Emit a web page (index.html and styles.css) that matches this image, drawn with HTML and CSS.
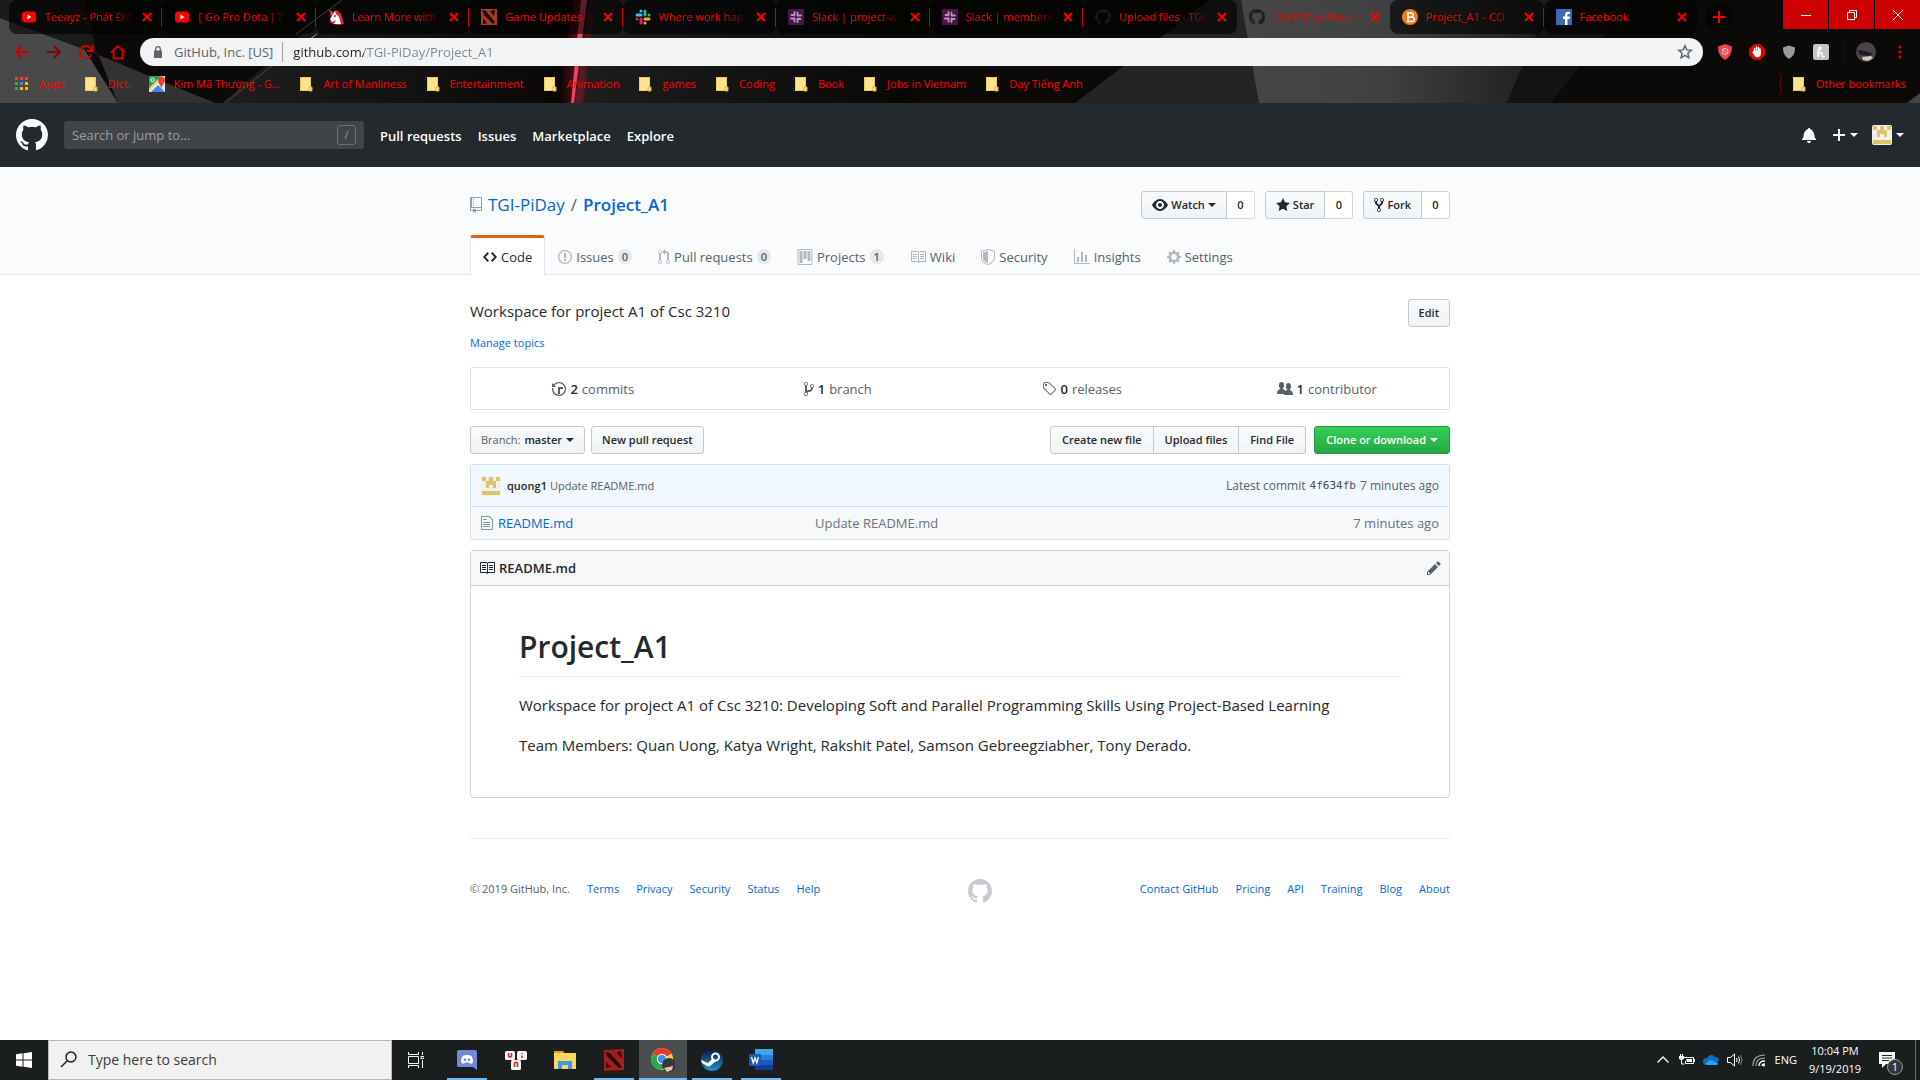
FILE: index.html
```html
<!DOCTYPE html>
<html lang="en">
<head>
<meta charset="utf-8">
<title>TGI-PiDay/Project_A1</title>
<link rel="stylesheet" href="styles.css">
</head>
<body>
<svg class="sprite" aria-hidden="true">
  <symbol id="mark" viewBox="0 0 16 16"><path fill-rule="evenodd" d="M8 0C3.58 0 0 3.58 0 8c0 3.54 2.29 6.53 5.47 7.59.4.07.55-.17.55-.38 0-.19-.01-.82-.01-1.49-2.01.37-2.53-.49-2.69-.94-.09-.23-.48-.94-.82-1.13-.28-.15-.68-.52-.01-.53.63-.01 1.08.58 1.23.82.72 1.21 1.87.87 2.33.66.07-.52.28-.87.51-1.07-1.78-.2-3.64-.89-3.64-3.95 0-.87.31-1.59.82-2.15-.08-.2-.36-1.02.08-2.12 0 0 .67-.21 2.2.82.64-.18 1.32-.27 2-.27.68 0 1.36.09 2 .27 1.53-1.04 2.2-.82 2.2-.82.44 1.1.16 1.92.08 2.12.51.56.82 1.27.82 2.15 0 3.07-1.87 3.75-3.65 3.95.29.25.54.73.54 1.48 0 1.07-.01 1.93-.01 2.2 0 .21.15.46.55.38A8.013 8.013 0 0 0 16 8c0-4.42-3.58-8-8-8z"/></symbol>
  <symbol id="book" viewBox="0 0 16 16"><path fill-rule="evenodd" d="M3 5h4v1H3V5zm0 3h4V7H3v1zm0 2h4V9H3v1zm11-5h-4v1h4V5zm0 2h-4v1h4V7zm0 2h-4v1h4V9zm2-6v9c0 .55-.45 1-1 1H9.500l-1 1-1-1H2c-.55 0-1-.45-1-1V3c0-.55.45-1 1-1h5.500l1 1 1-1H15c.55 0 1 .45 1 1zm-8 .5L7.500 3H2v9h6V3.500zm7-.5H9.500l-.5.5V12h6V3z"/></symbol>
  <symbol id="folder" viewBox="0 0 16 16"><path d="M2 1h11v14H2z" fill="#ffe48c"/><path d="M2.500 1.500h10v10M2.500 1.500v13h9" fill="none" stroke="#eccb5b"/><path d="M11 11h3v4h-3z" fill="#ffe48c" stroke="#d9b23c"/></symbol>
  <symbol id="close" viewBox="0 0 10 10"><path d="M1 1l8 8M9 1L1 9" stroke="#f00" stroke-width="2"/></symbol>
  <symbol id="youtube" viewBox="0 0 16 16"><rect x="1" y="2.500" width="14" height="11" rx="3" fill="#f00"/><path d="M6.500 5.500v5l4-2.500z" fill="#fff"/></symbol>
  <symbol id="slack-old" viewBox="0 0 16 16"><rect width="16" height="16" fill="#4a154b"/><path d="M6.500 3v3.500M3.500 6h3M9.500 3.500v3M9.500 6.500H13M6.500 12.500v-3M3 9.500h3.500M9.500 13V9.500M9.500 10h3" fill="none" stroke="#b995ba" stroke-width="1.800" stroke-linecap="round"/></symbol>
  <symbol id="crown" viewBox="0 0 20 20"><rect width="20" height="20" rx="2" fill="#f0f0f0"/><path d="M1 1h4v4H1zM8 1h4v4H8zM15 1h4v4h-4zM5 5h10v7h-3V9H8v3H5zM1 15h18v4H1z" fill="#dcc468"/></symbol>
  <symbol id="caret" viewBox="0 0 8 4"><path d="M0 0h8L4 4z"/></symbol>
</svg>

<div class="browser">
  <svg class="backdrop" viewBox="0 0 1920 103" preserveAspectRatio="none" aria-hidden="true">
    <defs>
      <linearGradient id="panel"><stop offset="0" stop-color="#464646"/><stop offset=".45" stop-color="#414141"/><stop offset="1" stop-color="#1c1c1b"/></linearGradient>
      <linearGradient id="shade"><stop offset="0" stop-color="#1e1e1e"/><stop offset="1" stop-color="#080706"/></linearGradient>
      <linearGradient id="glow"><stop offset="0" stop-color="#e01030" stop-opacity="0"/><stop offset=".5" stop-color="#e01030" stop-opacity=".35"/><stop offset="1" stop-color="#e01030" stop-opacity="0"/></linearGradient>
    </defs>
    <rect width="1920" height="103" fill="#0b0a09"/>
    <path d="M0 18L84 49 118 103H0z" fill="#494949"/>
    <path d="M84 49L215 103H118L98 54z" fill="#323232"/>
    <path d="M0 18V0h85l12 54z" fill="#1b1b1a"/>
    <path d="M342 0h235l-10 103H222z" fill="url(#shade)"/>
    <path d="M342 0L296 34M317 34L272 66" stroke="#a0a0a0" fill="none"/>
    <path d="M272 66L225 103" stroke="#4a4a4a"/>
    <path d="M590 0h260l70 103H575z" fill="url(#shade)"/>
    <path d="M573 0h24l-14 103h-24z" fill="url(#glow)"/>
    <path d="M581 0h6l-13 103h-3z" fill="#e84860"/>
    <path d="M1075 103L1210 0h35l14 103z" fill="#242424"/>
    <path d="M1241 0h310l-44 103h-248z" fill="url(#panel)"/>
    <path d="M1551 0h80l-80 103h-44z" fill="#141313"/>
    <path d="M1907 103l13-10v10z" fill="#444"/>
  </svg>

  <div class="strip">
    <div class="tabs">
      <div class="tab"><svg class="i16"><use href="#youtube"/></svg><span class="tab-title">Teeayz - Phát Điê</span><button class="x" aria-label="Close"><svg class="i10"><use href="#close"/></svg></button></div>
      <div class="tab"><svg class="i16"><use href="#youtube"/></svg><span class="tab-title">[ Go Pro Dota ] T</span><button class="x" aria-label="Close"><svg class="i10"><use href="#close"/></svg></button></div>
      <div class="tab"><svg class="i16" viewBox="0 0 16 16"><path d="M1 0l4 3 4-2 4 4 3 10-5 1-6-1-3-2 1-4z" fill="#d92c3c"/><path d="M2 10l3-5 2-3 1 3 3 3 2 7H6l2-4-4 2z" fill="#fff"/><circle cx="7" cy="7" r="1" fill="#d92c3c"/></svg><span class="tab-title">Learn More with</span><button class="x" aria-label="Close"><svg class="i10"><use href="#close"/></svg></button></div>
      <div class="tab"><svg class="i16" viewBox="0 0 16 16"><path d="M0 0h16v16H0z" fill="#a93a24"/><path d="M1 1l4 1 9 11-2 2-9-9zM9 2l5-1-1 6zM2 9l4 5-4 1z" fill="#1c0b08"/></svg><span class="tab-title whole">Game Updates</span><button class="x" aria-label="Close"><svg class="i10"><use href="#close"/></svg></button></div>
      <div class="tab"><svg class="i16" viewBox="0 0 16 16" fill="none" stroke-width="3" stroke-linecap="round"><path d="M2 6h4M6 2v.1" stroke="#36c5f0"/><path d="M10 2v4M14 6h.1" stroke="#2eb67d"/><path d="M10 10h4M10 14v-.1" stroke="#ecb22e"/><path d="M6 10v4M2 10h.1" stroke="#e01e5a"/></svg><span class="tab-title">Where work hap</span><button class="x" aria-label="Close"><svg class="i10"><use href="#close"/></svg></button></div>
      <div class="tab"><svg class="i16"><use href="#slack-old"/></svg><span class="tab-title">Slack | project-a</span><button class="x" aria-label="Close"><svg class="i10"><use href="#close"/></svg></button></div>
      <div class="tab"><svg class="i16"><use href="#slack-old"/></svg><span class="tab-title">Slack | memberin</span><button class="x" aria-label="Close"><svg class="i10"><use href="#close"/></svg></button></div>
      <div class="tab tab-before"><svg class="i16 dim"><use href="#mark"/></svg><span class="tab-title">Upload files · TGI</span><button class="x" aria-label="Close"><svg class="i10"><use href="#close"/></svg></button></div>
      <div class="tab tab-active"><svg class="i16 dark"><use href="#mark"/></svg><span class="tab-title">TGI-PiDay/Projec</span><button class="x" aria-label="Close"><svg class="i10"><use href="#close"/></svg></button></div>
      <div class="tab"><svg class="i16" viewBox="0 0 16 16"><circle cx="8" cy="8" r="8" fill="#f07c1c"/><path d="M6 3v10M5 4h4c3 0 3 4 0 4H6h4c3 0 3 4.500 0 4.500H5" fill="none" stroke="#fff" stroke-width="1.500"/></svg><span class="tab-title">Project_A1 - CO</span><button class="x" aria-label="Close"><svg class="i10"><use href="#close"/></svg></button></div>
      <div class="tab tab-last"><svg class="i16" viewBox="0 0 16 16"><path d="M0 0h16v16H0z" fill="#4267b2"/><path d="M9 16v-6H7V7.500h2V6c0-2 1-3.200 3-3.200h2V5h-1.500c-.8 0-1 .4-1 1v1.500H14l-.4 2.500h-2.100v6z" fill="#fff"/></svg><span class="tab-title whole">Facebook</span><button class="x" aria-label="Close"><svg class="i10"><use href="#close"/></svg></button></div>
    </div>
    <button class="newtab" aria-label="New tab"><svg class="i12" viewBox="0 0 12 12"><path d="M6 0v12M0 6h12" stroke="#f00" stroke-width="2"/></svg></button>
    <div class="winctl">
      <button aria-label="Minimize"><svg class="i10" viewBox="0 0 10 10"><path d="M0 5.500h10" stroke="#fff"/></svg></button>
      <button aria-label="Restore"><svg class="i10" viewBox="0 0 10 10" fill="none" stroke="#fff"><path d="M.5 2.500h7v7h-7zM2.500 2.500v-2h7v7h-2"/></svg></button>
      <button aria-label="Close window"><svg class="i10" viewBox="0 0 10 10"><path d="M0 0l10 10M10 0L0 10" stroke="#fff"/></svg></button>
    </div>
  </div>

  <div class="toolbar">
    <button class="tool" aria-label="Back"><svg class="i16" viewBox="0 0 16 16" fill="none" stroke="#d00000" stroke-width="2"><path d="M15 8H2M8 2L2 8l6 6"/></svg></button>
    <button class="tool" aria-label="Forward"><svg class="i16" viewBox="0 0 16 16" fill="none" stroke="#7a0a0a" stroke-width="2"><path d="M1 8h13M8 2l6 6-6 6"/></svg></button>
    <button class="tool" aria-label="Reload"><svg class="i16" viewBox="0 0 16 16" fill="none" stroke="#d00000" stroke-width="2"><path d="M13.500 10A6 6 0 1 1 12 3.800L14 6M14.500 1v6h-6"/></svg></button>
    <button class="tool" aria-label="Home"><svg class="i16" viewBox="0 0 16 16" fill="none" stroke="#d00000" stroke-width="2"><path d="M1 8.500L8 2l7 6.500M3.500 7v7.500h9V7"/></svg></button>
    <div class="omnibox">
      <svg class="i12" viewBox="0 0 12 12"><path d="M2 4.500h8V12H2z" fill="#5f6368"/><path d="M3.700 5V3a2.300 2.300 0 0 1 4.600 0v2" fill="none" stroke="#5f6368" stroke-width="1.300"/></svg>
      <label class="origin" for="url">GitHub, Inc. [US]</label>
      <input class="url" id="url" value="github.com/TGI-PiDay/Project_A1">
      <button class="plain" aria-label="Bookmark"><svg class="i16" viewBox="0 0 16 16"><path d="M8 1.800l1.800 4.100 4.400.4-3.300 3 1 4.400L8 11.400l-3.900 2.300 1-4.400-3.300-3 4.400-.4z" fill="none" stroke="#5f6368" stroke-width="1.500"/></svg></button>
    </div>
    <div class="exts">
      <button class="plain" aria-label="uBlock"><svg class="i16" viewBox="0 0 16 16"><path d="M8 0l7 2.500c0 6-1.500 10-7 13.500C2.500 12.500 1 8.500 1 2.500z" fill="#e8474d"/><circle cx="8" cy="7.500" r="3" fill="none" stroke="#fbd0d0"/><path d="M6 5.500l4 4" stroke="#fbd0d0"/></svg></button>
      <button class="plain" aria-label="AdBlock"><svg class="i16" viewBox="0 0 16 16"><path d="M5 0h6l5 5v6l-5 5H5l-5-5V5z" fill="#e60000"/><path d="M5.500 8V4.500M7.500 8V3M9.500 8V3.500M11 8V5" stroke="#fff" stroke-width="1.500" stroke-linecap="round"/><path d="M4.800 7h7v3c0 4-5.500 4.500-6.600 1L3 8.500z" fill="#fff"/></svg></button>
      <button class="plain" aria-label="Shield"><svg class="i16" viewBox="0 0 16 16"><path d="M8 1.500l6 2c0 5.500-1.500 8.500-6 11.500-4.500-3-6-6-6-11.500z" fill="#9a9a9a"/></svg></button>
      <button class="plain" aria-label="Honey"><svg class="i16" viewBox="0 0 16 16"><rect width="16" height="16" rx="2" fill="#c4c4c4"/><path d="M4 7c4-1 5-4 3-4S5 9 5 13c1-5 4-6 4-3s0 4 3 2" fill="none" stroke="#fff" stroke-width="1.500"/></svg></button>
    </div>
    <button class="plain profile" aria-label="Profile"><svg class="i20" viewBox="0 0 20 20"><circle cx="10" cy="10" r="10" fill="#46464a"/><path d="M2 8l8 1 7 3-4 2-9-1z" fill="#1c1c1e"/><path d="M6 15l9-1 2 2-5 3-5-1z" fill="#d8c8b0"/><path d="M8 3l4-1" stroke="#7a3038" stroke-width="2"/></svg></button>
    <button class="plain" aria-label="Menu"><svg class="i16" viewBox="0 0 16 16" fill="#d00000"><circle cx="8" cy="3" r="1.600"/><circle cx="8" cy="8" r="1.600"/><circle cx="8" cy="13" r="1.600"/></svg></button>
  </div>

  <nav class="bookmarks">
    <a href="#"><svg class="i16" viewBox="0 0 16 16"><path d="M1 1h3v3H1zM6 1h3v3H6zM11 1h3v3h-3z" fill="#ea4335"/><path d="M1 6h3v3H1z" fill="#34a853"/><path d="M6 6h3v3H6z" fill="#4285f4"/><path d="M11 6h3v3h-3zM6 11h3v3H6zM11 11h3v3h-3z" fill="#fbbc05"/><path d="M1 11h3v3H1z" fill="#34a853"/></svg>Apps</a>
    <a href="#"><svg class="i16"><use href="#folder"/></svg>Dict.</a>
    <a href="#"><svg class="i16" viewBox="0 0 16 16"><path d="M0 0h16v16H0z" fill="#e8e8e8"/><path d="M0 0h13L0 13z" fill="#1fa463"/><path d="M2 16l7-7 7 7z" fill="#4285f4"/><path d="M0 12L12 0h3L0 15z" fill="#ffd04b"/><path d="M12.500 12C11 8 9 7 9 4a3.500 3.500 0 0 1 7 0c0 3-2.500 4-3.500 8z" fill="#ea4335"/><circle cx="3.500" cy="4" r="1.700" fill="none" stroke="#fff"/></svg>Kim Mã Thượng - G...</a>
    <a href="#"><svg class="i16"><use href="#folder"/></svg>Art of Manliness</a>
    <a href="#"><svg class="i16"><use href="#folder"/></svg>Entertainment</a>
    <a href="#"><svg class="i16"><use href="#folder"/></svg>Animation</a>
    <a href="#"><svg class="i16"><use href="#folder"/></svg>games</a>
    <a href="#"><svg class="i16"><use href="#folder"/></svg>Coding</a>
    <a href="#"><svg class="i16"><use href="#folder"/></svg>Book</a>
    <a href="#"><svg class="i16"><use href="#folder"/></svg>Jobs in Vietnam</a>
    <a href="#"><svg class="i16"><use href="#folder"/></svg>Dạy Tiếng Anh</a>
    <a href="#" class="other"><svg class="i16"><use href="#folder"/></svg>Other bookmarks</a>
  </nav>
</div>

<header class="gh-header">
  <a href="#" class="gh-logo" aria-label="GitHub"><svg class="i32"><use href="#mark"/></svg></a>
  <div class="gh-search"><input type="text" placeholder="Search or jump to..." aria-label="Search or jump to"><kbd>/</kbd></div>
  <nav class="gh-nav"><a href="#">Pull requests</a><a href="#">Issues</a><a href="#">Marketplace</a><a href="#">Explore</a></nav>
  <div class="gh-user">
    <button class="plain" aria-label="Notifications"><svg class="i16" viewBox="0 0 14 16"><path fill-rule="evenodd" d="M14 12v1H0v-1l.73-.58c.77-.77.81-2.55 1.190-4.420C2.690 3.230 6 2 6 2c0-.55.45-1 1-1s1 .45 1 1c0 0 3.390 1.230 4.160 5 .38 1.880.42 3.660 1.190 4.420l.66.58H14zm-7 4c1.110 0 2-.89 2-2H5c0 1.110.89 2 2 2z"/></svg></button>
    <button class="plain" aria-label="Create new"><svg class="i16" viewBox="0 0 14 16"><path d="M13 9H8v5H6V9H1V7h5V2h2v5h5v2z"/></svg><svg class="caret"><use href="#caret"/></svg></button>
    <button class="plain account" aria-label="Account"><svg class="i20"><use href="#crown"/></svg><svg class="caret"><use href="#caret"/></svg></button>
  </div>
</header>

<div class="pagehead">
  <div class="container">
    <div class="title-row">
      <h1 class="repo-title"><svg class="w12" viewBox="0 0 12 16"><path fill-rule="evenodd" d="M4 9H3V8h1v1zm0-3H3v1h1V6zm0-2H3v1h1V4zm0-2H3v1h1V2zm8-1v12c0 .55-.45 1-1 1H6v2l-1.500-1.500L3 16v-2H1c-.55 0-1-.45-1-1V1c0-.55.45-1 1-1h10c.55 0 1 .45 1 1zm-1 10H1v2h2v-1h3v1h5v-2zm0-10H2v9h9V1z"/></svg><a href="#">TGI-PiDay</a><span>/</span><a href="#" class="strong">Project_A1</a></h1>
      <div class="social">
        <div class="group"><button class="btn"><svg class="i16" viewBox="0 0 16 16"><path fill-rule="evenodd" d="M8.060 2C3 2 0 8 0 8s3 6 8.060 6C13 14 16 8 16 8s-3-6-7.940-6zM8 12c-2.200 0-4-1.780-4-4 0-2.200 1.800-4 4-4 2.220 0 4 1.800 4 4 0 2.220-1.780 4-4 4zm2-4c0 1.110-.89 2-2 2-1.110 0-2-.89-2-2 0-1.110.89-2 2-2 1.110 0 2 .89 2 2z"/></svg>Watch<svg class="caret"><use href="#caret"/></svg></button><a href="#" class="count">0</a></div>
        <div class="group"><button class="btn"><svg class="w14" viewBox="0 0 14 16"><path d="M14 6l-4.900-.64L7 1 4.900 5.360 0 6l3.600 3.260L2.670 14 7 11.670 11.330 14l-.93-4.740L14 6z"/></svg>Star</button><a href="#" class="count">0</a></div>
        <div class="group"><button class="btn"><svg class="w10" viewBox="0 0 10 16"><path fill-rule="evenodd" d="M8 1a1.993 1.993 0 0 0-1 3.720V6L5 8 3 6V4.720A1.993 1.993 0 0 0 2 1a1.993 1.993 0 0 0-1 3.720V6.500l3 3v1.780A1.993 1.993 0 0 0 5 15a1.993 1.993 0 0 0 1-3.720V9.500l3-3V4.720A1.993 1.993 0 0 0 8 1zM2 4.200C1.340 4.200.8 3.650.8 3c0-.65.55-1.200 1.200-1.200.65 0 1.200.55 1.200 1.200 0 .65-.55 1.200-1.200 1.200zm3 10c-.66 0-1.200-.55-1.200-1.200 0-.65.55-1.200 1.200-1.200.65 0 1.200.55 1.200 1.200 0 .65-.55 1.200-1.200 1.200zm3-10c-.66 0-1.200-.55-1.200-1.200 0-.65.55-1.200 1.200-1.200.65 0 1.200.55 1.200 1.200 0 .65-.55 1.200-1.200 1.200z"/></svg>Fork</button><a href="#" class="count">0</a></div>
      </div>
    </div>
    <nav class="reponav">
      <a href="#" class="selected"><svg class="w14" viewBox="0 0 14 16"><path d="M9.500 3L8 4.500 11.500 8 8 11.500 9.500 13 14 8 9.500 3zm-5 0L0 8l4.500 5L6 11.500 2.500 8 6 4.500 4.500 3z"/></svg>Code</a>
      <a href="#"><svg class="w14" viewBox="0 0 14 16"><path fill-rule="evenodd" d="M7 2.300c3.140 0 5.700 2.560 5.700 5.700s-2.560 5.700-5.700 5.700A5.710 5.710 0 0 1 1.300 8c0-3.140 2.560-5.700 5.700-5.700zM7 1C3.140 1 0 4.140 0 8s3.140 7 7 7 7-3.140 7-7-3.140-7-7-7zm1 3H6v5h2V4zm0 6H6v2h2v-2z"/></svg>Issues<span class="badge">0</span></a>
      <a href="#"><svg class="w12" viewBox="0 0 12 16"><path fill-rule="evenodd" d="M11 11.280V5c-.03-.78-.34-1.470-.94-2.060C9.460 2.350 8.780 2.030 8 2H7V0L4 3l3 3V4h1c.27.02.48.11.69.31.21.2.3.42.31.69v6.280A1.993 1.993 0 0 0 10 15a1.993 1.993 0 0 0 1-3.720zm-1 2.920c-.66 0-1.200-.55-1.200-1.200 0-.65.55-1.200 1.200-1.200.65 0 1.200.55 1.200 1.200 0 .65-.55 1.200-1.200 1.200zM4 3c0-1.110-.89-2-2-2a1.993 1.993 0 0 0-1 3.720v6.560A1.993 1.993 0 0 0 2 15a1.993 1.993 0 0 0 1-3.720V4.720c.59-.34 1-.98 1-1.720zm-.8 10c0 .66-.55 1.200-1.200 1.200-.65 0-1.200-.55-1.200-1.200 0-.65.55-1.200 1.200-1.200.65 0 1.200.55 1.200 1.200zM2 4.200C1.340 4.200.8 3.650.8 3c0-.65.55-1.200 1.200-1.200.65 0 1.200.55 1.200 1.200 0 .65-.55 1.200-1.200 1.200z"/></svg>Pull requests<span class="badge">0</span></a>
      <a href="#"><svg class="i16" viewBox="0 0 15 16"><path fill-rule="evenodd" d="M10 12h3V2h-3v10zm-4-2h3V2H6v8zm-4 4h3V2H2v12zm-1 1h13V1H1v14zM14 0H1a1 1 0 0 0-1 1v14a1 1 0 0 0 1 1h13a1 1 0 0 0 1-1V1a1 1 0 0 0-1-1z"/></svg>Projects<span class="badge">1</span></a>
      <a href="#"><svg class="i16"><use href="#book"/></svg>Wiki</a>
      <a href="#"><svg class="w14" viewBox="0 0 14 16"><path fill-rule="evenodd" d="M0 2l7-2 7 2v6.020C14 12.690 8.690 16 7 16c-1.690 0-7-3.310-7-7.980V2zm1 .75L7 1l6 1.750v5.268C13 12.104 8.449 15 7 15c-1.449 0-6-2.896-6-6.982V2.750zm1 .75L7 2v12c-1.207 0-5-2.482-5-5.985V3.500z"/></svg>Security</a>
      <a href="#"><svg class="i16" viewBox="0 0 16 16"><path d="M16 14v1H0V0h1v14h15zM5 13H3V8h2v5zm4 0H7V3h2v10zm4 0h-2V6h2v7z"/></svg>Insights</a>
      <a href="#"><svg class="w14" viewBox="0 0 14 16"><path fill-rule="evenodd" d="M14 8.770v-1.600l-1.940-.64-.45-1.090.88-1.840-1.130-1.130-1.810.91-1.090-.45-.69-1.920h-1.600l-.63 1.940-1.110.45-1.840-.88-1.130 1.130.91 1.810-.45 1.090L0 7.230v1.590l1.940.64.45 1.090-.88 1.840 1.130 1.130 1.810-.91 1.090.45.69 1.920h1.590l.63-1.940 1.110-.45 1.840.88 1.130-1.130-.92-1.810.47-1.090L14 8.750v.02zM7 11c-1.660 0-3-1.340-3-3s1.340-3 3-3 3 1.340 3 3-1.340 3-3 3z"/></svg>Settings</a>
    </nav>
  </div>
</div>

<main class="container main">
  <div class="about"><span>Workspace for project A1 of Csc 3210</span><button class="btn">Edit</button></div>
  <a href="#" class="topics">Manage topics</a>

  <ul class="summary">
    <li><a href="#"><svg class="w14" viewBox="0 0 14 16"><path fill-rule="evenodd" d="M8 13H6V6h5v2H8v5zM7 1C4.810 1 2.870 2.020 1.590 3.590L0 2v4h4L2.500 4.500C3.550 3.170 5.170 2.300 7 2.300c3.140 0 5.700 2.560 5.700 5.700s-2.560 5.700-5.700 5.700A5.710 5.710 0 0 1 1.300 8c0-.34.03-.67.09-1H.08C.03 7.330 0 7.660 0 8c0 3.860 3.140 7 7 7s7-3.140 7-7-3.140-7-7-7z"/></svg><b>2</b>commits</a></li>
    <li><a href="#"><svg class="w10" viewBox="0 0 10 16"><path fill-rule="evenodd" d="M10 5c0-1.110-.89-2-2-2a1.993 1.993 0 0 0-1 3.720v.3c-.02.52-.23.98-.63 1.380-.4.4-.86.61-1.380.63-.83.02-1.480.16-2 .45V4.720a1.993 1.993 0 0 0-1-3.720C.88 1 0 1.890 0 3a2 2 0 0 0 1 1.720v6.560c-.59.35-1 .99-1 1.720 0 1.110.89 2 2 2 1.110 0 2-.89 2-2 0-.53-.2-1-.53-1.360.09-.06.48-.41.59-.47.25-.11.56-.17.94-.17 1.050-.05 1.950-.45 2.750-1.250S8.950 7.770 9 6.730h-.02C9.590 6.370 10 5.730 10 5zM2 1.800c.66 0 1.200.55 1.200 1.200 0 .65-.55 1.200-1.200 1.200C1.350 4.200.8 3.650.8 3c0-.65.55-1.200 1.200-1.200zm0 12.410c-.66 0-1.200-.55-1.200-1.200 0-.65.55-1.200 1.200-1.200.65 0 1.200.55 1.200 1.200 0 .65-.55 1.200-1.200 1.200zm6-8c-.66 0-1.200-.55-1.200-1.200 0-.65.55-1.200 1.200-1.200.65 0 1.200.55 1.200 1.200 0 .65-.55 1.200-1.200 1.200z"/></svg><b>1</b>branch</a></li>
    <li><a href="#"><svg class="w14" viewBox="0 0 14 16"><path fill-rule="evenodd" d="M7.730 1.730C7.260 1.260 6.620 1 5.960 1H3.500C2.130 1 1 2.130 1 3.500v2.470c0 .66.27 1.300.73 1.770l6.060 6.060c.39.39 1.020.39 1.410 0l4.590-4.590a.996.996 0 0 0 0-1.410L7.730 1.730zM2.380 7.090c-.31-.3-.47-.7-.47-1.130V3.500c0-.88.72-1.590 1.590-1.590h2.470c.42 0 .83.16 1.130.47l6.140 6.130-4.730 4.730-6.130-6.150zM3.010 3h2v2H3V3h.01z"/></svg><b>0</b>releases</a></li>
    <li><a href="#"><svg class="i16" viewBox="0 0 16 16"><path d="M16 12.999c0 .439-.45 1-1 1H7.995c-.539 0-.994-.447-.995-.999H1c-.54 0-1-.561-1-1 0-2.634 3-4 3-4s.229-.409 0-1c-.841-.621-1.058-.59-1-3 .058-2.419 1.367-3 2.500-3s2.442.58 2.500 3c.058 2.410-.159 2.379-1 3-.229.59 0 1 0 1s1.549.711 2.420 2.088C9.196 9.369 10 8.999 10 8.999s.229-.409 0-1c-.841-.62-1.058-.59-1-3 .058-2.419 1.367-3 2.500-3s2.437.581 2.495 3c.059 2.410-.158 2.380-1 3-.229.59 0 1 0 1s3.005 1.366 3.005 4"/></svg><b>1</b>contributor</a></li>
  </ul>

  <div class="filenav">
    <button class="btn"><span class="muted">Branch:</span>master<svg class="caret"><use href="#caret"/></svg></button>
    <button class="btn">New pull request</button>
    <div class="group push"><button class="btn wide">Create new file</button><button class="btn wide">Upload files</button><button class="btn wide">Find File</button></div>
    <button class="btn wide primary">Clone or download<svg class="caret"><use href="#caret"/></svg></button>
  </div>

  <div class="commit">
    <svg class="i20"><use href="#crown"/></svg>
    <a href="#" class="author">quong1</a><a href="#" class="msg">Update README.md</a>
    <div class="latest"><span>Latest commit</span><a href="#" class="sha">4f634fb</a><span>7 minutes ago</span></div>
  </div>
  <table class="files">
    <tr><td class="name"><div class="file"><svg class="w12" viewBox="0 0 12 16"><path fill-rule="evenodd" d="M6 5H2V4h4v1zM2 8h7V7H2v1zm0 2h7V9H2v1zm0 2h7v-1H2v1zm10-7.500V14c0 .55-.45 1-1 1H1c-.55 0-1-.45-1-1V2c0-.55.45-1 1-1h7.500L12 4.500zM11 5L8 2H1v12h10V5z"/></svg><a href="#">README.md</a></div></td><td>Update README.md</td><td class="age">7 minutes ago</td></tr>
  </table>

  <section class="readme">
    <div class="readme-head"><svg class="i16"><use href="#book"/></svg><h3>README.md</h3><button class="plain edit" aria-label="Edit this file"><svg class="w14" viewBox="0 0 14 16"><path fill-rule="evenodd" d="M0 12v3h3l8-8-3-3-8 8zm3 2H1v-2h1v1h1v1zm10.300-9.300L12 6 9 3l1.300-1.300a.996.996 0 0 1 1.410 0l1.590 1.590c.39.39.39 1.020 0 1.410z"/></svg></button></div>
    <article class="readme-body">
      <h1>Project_A1</h1>
      <p>Workspace for project A1 of Csc 3210: Developing Soft and Parallel Programming Skills Using Project-Based Learning</p>
      <p>Team Members: Quan Uong, Katya Wright, Rakshit Patel, Samson Gebreegziabher, Tony Derado.</p>
    </article>
  </section>

  <footer class="footer">
    <div class="links"><span>© 2019 GitHub, Inc.</span><a href="#">Terms</a><a href="#">Privacy</a><a href="#">Security</a><a href="#">Status</a><a href="#">Help</a></div>
    <svg class="i24"><use href="#mark"/></svg>
    <div class="links"><a href="#">Contact GitHub</a><a href="#">Pricing</a><a href="#">API</a><a href="#">Training</a><a href="#">Blog</a><a href="#">About</a></div>
  </footer>
</main>

<div class="taskbar">
  <button class="app" aria-label="Start"><svg class="i16" viewBox="0 0 16 16" fill="#fff"><path d="M0 2.200l6.500-.9v6.200H0zM7.500 1.200L16 0v7.500H7.500zM0 8.500h6.500v6.200L0 13.800zM7.500 8.500H16V16l-8.500-1.200z"/></svg></button>
  <div class="winsearch"><svg class="i20" viewBox="0 0 20 20" fill="none" stroke="#1c1c1c" stroke-width="1.400"><circle cx="12" cy="7" r="5"/><path d="M8.500 10.500L2 17"/></svg><input type="text" placeholder="Type here to search" aria-label="Type here to search"></div>
  <button class="app" aria-label="Task view"><svg class="i16" viewBox="0 0 16 16" fill="none" stroke="#fff"><path d="M.5 0v2.500h10V0M.5 16v-2.500h10V16M.5 4.500h10v7H.5zM14.500 0v3M14.500 8v8M13 4.500h3v2h-3z"/></svg></button>
  <div class="apps">
    <button class="app open" aria-label="Discord"><svg class="i22" viewBox="0 0 22 22"><path d="M3 1h16a2 2 0 0 1 2 2v18l-4-3H3a2 2 0 0 1-2-2V3a2 2 0 0 1 2-2z" fill="#7289da"/><path d="M6.500 7Q11 5 15.500 7q2 3.500 1.500 6.500-1.500 1.200-3 1.200l-.8-1.200H9l-.8 1.200q-1.700 0-3.200-1.200Q4.500 10.500 6.500 7z" fill="#fff"/><circle cx="9" cy="10.700" r="1.300" fill="#7289da"/><circle cx="13" cy="10.700" r="1.300" fill="#7289da"/></svg></button>
    <button class="app" aria-label="UniKey"><svg class="i22" viewBox="0 0 22 22"><rect x="0" y="2" width="10" height="9" rx="1.500" fill="#f4f4f4"/><rect x="12" y="2" width="10" height="9" rx="1.500" fill="#f4f4f4"/><rect x="6" y="11" width="10" height="10" rx="1.500" fill="#f4f4f4"/><path d="M3.500 4v3q1.500 2 3 0V4M17 6.500V9M17 4v1M9.500 18v-4q1.500-1.500 3 0v4" fill="none" stroke="#e02020" stroke-width="1.500"/></svg></button>
    <button class="app" aria-label="File Explorer"><svg class="i22" viewBox="0 0 22 22"><path d="M0 2h9l1 2h12v16H0z" fill="#ffd75e"/><path d="M0 2h9l1 2H0z" fill="#e8a317"/><path d="M4 20v-8h14v8h-4v-4H8v4z" fill="#3a9be8"/></svg></button>
    <button class="app open" aria-label="Dota 2"><svg class="i22" viewBox="0 0 22 22"><path d="M1 1l20-1v21l-20 1z" fill="#a81c1c"/><path d="M3 3l4 1 12 14-3 1L4 7zM14 3l4-1 1 7-4-3zM3 13l5 5-5 1z" fill="#200606"/></svg></button>
    <button class="app open active" aria-label="Chrome"><svg class="i24" viewBox="0 0 24 24"><circle cx="11" cy="11" r="11" fill="#ffcd42"/><path d="M11 11L1.500 5.500a11 11 0 0 1 19 0z" fill="#e33b2e"/><path d="M11 11L1.500 5.500A11 11 0 0 0 10.500 22l4-7z" fill="#2aa84f"/><circle cx="11" cy="11" r="5.200" fill="#fff"/><circle cx="11" cy="11" r="4.200" fill="#4a8af4"/><circle cx="18" cy="17" r="7" fill="#38383c"/><path d="M13 20l9-2-1 4-5 2z" fill="#d8c8b0"/></svg></button>
    <button class="app open" aria-label="Steam"><svg class="i22" viewBox="0 0 22 22"><defs><linearGradient id="steam" x2="0" y2="1"><stop offset="0" stop-color="#10183c"/><stop offset="1" stop-color="#2090c8"/></linearGradient></defs><circle cx="11" cy="11" r="11" fill="url(#steam)"/><circle cx="14.500" cy="8" r="3.500" fill="none" stroke="#fff" stroke-width="2"/><path d="M0 11l7 3 5-5 3 3-6 5a3 3 0 0 1-3 0L1 14z" fill="#fff"/></svg></button>
    <button class="app open" aria-label="Word"><svg class="i24" viewBox="0 0 24 24"><path d="M6 1h18v6H6z" fill="#41a5ee"/><path d="M6 7h18v5H6z" fill="#2b7cd3"/><path d="M6 12h18v5H6z" fill="#185abd"/><path d="M6 17h18v5H6z" fill="#103f91"/><path d="M0 6h12v12H0z" fill="#185abd"/><path d="M2.500 9l1.700 6L6 10l1.800 5 1.700-6" fill="none" stroke="#fff" stroke-width="1.300"/></svg></button>
  </div>
  <div class="tray">
    <svg class="i16" viewBox="0 0 16 16" fill="none" stroke="#fff"><path d="M2.500 10.500L8 5l5.500 5.500" stroke-width="1.400"/></svg>
    <svg class="i16" viewBox="0 0 16 16"><path d="M5 5.500h9.500v6h-8V9M15.500 7v3" fill="none" stroke="#fff"/><path d="M7 7h6v3H8zM0 4h5v3L3 8H2L0 7zM1 2h1v2H1zM3 2h1v2H3z" fill="#fff"/><path d="M2.500 8v4h3" fill="none" stroke="#fff"/></svg>
    <svg class="i16" viewBox="0 0 16 16"><path d="M4 6a4.500 4.500 0 0 1 8-1 4 4 0 0 1 4 4l-8 4H3A3.500 3.500 0 0 1 4 6z" fill="#0f6cc4"/><path d="M2 12l5-4 8 3a2 2 0 0 1-1 2H4z" fill="#28a8ea"/></svg>
    <svg class="i16" viewBox="0 0 16 16" fill="none" stroke="#fff"><path d="M.5 5.500h3l4-3.500v12l-4-3.500h-3zM9.500 6q1 2 0 4M11.500 4.500q2 3.500 0 7"/><path d="M13.500 3q3 5 0 10" stroke="#888"/></svg>
    <svg class="i16" viewBox="0 0 16 16" fill="none" stroke="#aaa"><path d="M2 14Q2 3 14 3M5 14q0-8 9-8" stroke-width="1.200"/><path d="M8 14q0-5 6-5M11 14q0-2 3-2" stroke="#fff" stroke-width="1.300"/><circle cx="13" cy="13.500" r="1" fill="#fff" stroke="none"/></svg>
    <span>ENG</span>
    <div class="clock"><time>10:04 PM</time><time>9/19/2019</time></div>
    <button class="plain notes" aria-label="1 notification"><svg class="i24" viewBox="0 0 24 24"><path d="M0 2h16v12H7l-4 4v-4H0z" fill="#fff"/><path d="M3 5.500h10M3 8h10M3 10.500h7" stroke="#222"/></svg><span class="num">1</span></button>
  </div>
</div>
</body>
</html>
```
FILE: styles.css
```css
* { box-sizing: border-box; }
body {
  margin: 0;
  min-height: 100vh;
  display: flex;
  flex-direction: column;
  background: #fff;
  color: #24292e;
  font: 13px/20px "Open Sans", "Noto Sans", sans-serif;
}
a { color: #0366d6; text-decoration: none; }
h1, h3, p, ul { margin: 0; padding: 0; }
button, input { font: inherit; color: inherit; }
button { cursor: pointer; }
input { border: 0; background: none; padding: 0; outline: 0; min-width: 0; }
svg { display: block; flex: none; }
svg:not([fill]) { fill: currentColor; }
.sprite { position: absolute; width: 0; height: 0; }
.i10 { width: 10px; height: 10px; }
.i12 { width: 12px; height: 12px; }
.i16 { width: 16px; height: 16px; }
.i20 { width: 20px; height: 20px; }
.i22 { width: 22px; height: 22px; }
.i24 { width: 24px; height: 24px; }
.i32 { width: 32px; height: 32px; }
.w10 { width: 10px; height: 16px; }
.w12 { width: 12px; height: 16px; }
.w14 { width: 14px; height: 16px; }
.caret { width: 8px; height: 4px; }
.plain { display: flex; align-items: center; border: 0; background: none; padding: 0; }

/* Browser chrome */
.browser { position: relative; isolation: isolate; color: #f00; font-size: 11px; background: #0b0a09; }
.backdrop { position: absolute; inset: 0; width: 100%; height: 100%; z-index: -1; }
.strip { display: flex; height: 34px; align-items: flex-start; }
.tabs { display: flex; flex: 1; min-width: 0; padding-left: 9px; }
.tab {
  flex: 1 1 0; min-width: 0; height: 34px;
  display: flex; align-items: center; gap: 8px; padding: 0 10px 0 12px;
  background: rgba(0, 0, 0, .6); border-radius: 8px;
  position: relative;
}
.tab::after { content: ""; position: absolute; right: 0; top: 8px; width: 1px; height: 19px; background: #d00000; }
.tab-active { background: none; }
.tab-active::after, .tab-before::after, .tab-last::after { display: none; }
.tab-title {
  flex: 1; overflow: hidden; white-space: nowrap;
  -webkit-mask-image: linear-gradient(to right, #000 75%, transparent);
  mask-image: linear-gradient(to right, #000 75%, transparent);
}
.tab-title.whole { -webkit-mask-image: none; mask-image: none; }
.x { display: flex; border: 0; background: none; padding: 0; }
.dim { color: #151719; }
.dark { color: #1b1f23; }
.newtab { display: flex; align-items: center; justify-content: center; width: 28px; height: 28px; margin: 3px 50px 0 8px; padding: 0; border: 0; border-radius: 50%; background: #050505; }
.winctl { display: flex; gap: 1px; }
.winctl button { display: flex; align-items: center; justify-content: center; width: 45px; height: 29px; border: 0; padding: 0; background: #cc0000; }
.toolbar { display: flex; align-items: center; padding: 4px 12px 4px 6px; }
.tool { display: flex; align-items: center; justify-content: center; width: 32px; height: 28px; border: 0; background: none; padding: 0; }
.omnibox { flex: 1; display: flex; align-items: center; height: 28px; margin-left: 6px; padding: 0 10px 0 12px; border-radius: 14px; background: #f1f3f4; font-size: 13px; }
.origin { margin-left: 10px; padding-right: 9px; color: #5f6368; border-right: 1px solid #9aa0a6; }
.url {
  flex: 1; margin-left: 10px; color: transparent;
  background: linear-gradient(to right, #202124 71px, #80868b 71px);
  -webkit-background-clip: text; background-clip: text;
}
.exts { display: flex; gap: 16px; margin-left: 14px; padding-right: 14px; border-right: 1px solid #3d0505; }
.profile { margin: 0 16px 0 12px; }
.bookmarks { display: flex; align-items: center; gap: 18px; height: 33px; padding: 0 14px 5px; }
.bookmarks a { display: flex; align-items: center; gap: 9px; color: #f00; white-space: nowrap; }
.bookmarks .other { margin-left: auto; padding-left: 10px; border-left: 1px solid #5a0606; }

/* GitHub header */
.gh-header { display: flex; align-items: center; height: 64px; padding: 0 16px; background: #24292e; color: #fff; }
.gh-logo { color: #fff; }
.gh-search { display: flex; align-items: center; width: 300px; height: 28px; margin: 0 16px; padding: 0 8px; border-radius: 3px; background: #404448; }
.gh-search input { flex: 1; }
.gh-search input::placeholder { color: #9c9ea0; }
.gh-search kbd { width: 19px; height: 20px; border: 1px solid #6c7074; border-radius: 3px; color: #9c9ea0; font: 11px/18px "Open Sans", sans-serif; text-align: center; }
.gh-nav { display: flex; gap: 16px; padding-top: 2px; }
.gh-nav a { color: #fff; font-weight: 600; }
.gh-user { display: flex; align-items: center; gap: 14px; margin-left: auto; }
.gh-user .plain { gap: 3px; }
.gh-user .account { gap: 4px; }

/* Repository head */
.container { width: 100%; max-width: 980px; margin: 0 auto; }
.pagehead { padding-top: 24px; background: #fafbfc; border-bottom: 1px solid #e1e4e8; }
.title-row { display: flex; justify-content: space-between; height: 28px; margin-bottom: 16px; }
.repo-title { display: flex; align-items: center; gap: 6px; font-size: 17px; font-weight: 400; line-height: 28px; color: #586069; }
.repo-title svg { color: #959da5; }
.strong { font-weight: 600; }
.social { display: flex; gap: 10px; }
.group { display: flex; }
.btn {
  display: flex; align-items: center; gap: 4px; height: 28px; padding: 0 10px;
  border: 1px solid #c5c9cd; border-radius: 3px;
  background: linear-gradient(#fafbfc, #eff3f6);
  font-size: 11px; font-weight: 600; line-height: 20px; white-space: nowrap;
}
.social .btn { gap: 3px; }
.wide { padding: 0 11px; }
.count { display: flex; align-items: center; justify-content: center; width: 28px; border: 1px solid #d1d5da; border-left: 0; border-radius: 0 3px 3px 0; background: #fff; color: #24292e; font-size: 11px; font-weight: 600; }
.group .btn:not(:last-child) { border-radius: 3px 0 0 3px; }
.group .btn + .btn { border-left: 0; border-radius: 0; }
.group .btn + .btn:last-child { border-radius: 0 3px 3px 0; }
.reponav { display: flex; height: 40px; margin-bottom: -1px; }
.reponav a { display: flex; align-items: center; gap: 4px; padding: 2px 12px 0; border: 1px solid transparent; border-bottom: 0; color: #586069; }
.reponav a svg { color: #b4b8bc; }
.reponav .selected { padding-top: 0; border-color: #e1e4e8; border-top: 3px solid #e36209; border-radius: 3px 3px 0 0; background: #fff; color: #24292e; }
.reponav .selected svg { color: #24292e; }
.badge { min-width: 14px; padding: 0 4px; border-radius: 8px; background: #e6e8ea; font-size: 11px; font-weight: 600; line-height: 15px; text-align: center; }

/* Repository content */
.main { flex: 1; padding-top: 24px; }
.about { display: flex; justify-content: space-between; font-size: 15px; line-height: 24px; }
.topics { display: block; margin: 8px 0 16px; font-size: 11px; line-height: 16px; }
.summary { display: grid; grid-template-columns: repeat(4, 1fr); height: 43px; list-style: none; border: 1px solid #dfe2e5; border-radius: 3px; }
.summary li { display: flex; align-items: center; justify-content: center; }
.summary a { display: flex; align-items: center; gap: 4px; color: #586069; }
.summary b { color: #24292e; font-weight: 600; }
.filenav { display: flex; gap: 6px; margin: 16px 0 10px; }
.push { margin: 0 2px 0 auto; }
.muted { color: #586069; font-weight: 400; }
.primary { border-color: #239a3e; background: linear-gradient(#34d058, #28a745); color: #fff; }
.commit { display: flex; align-items: center; height: 43px; padding: 0 10px; border: 1px solid #c8e1ff; border-radius: 3px 3px 0 0; background: #f1f8ff; font-size: 12px; color: #586069; }
.commit .author { margin: 0 3px 0 6px; color: #24292e; font-weight: 600; font-size: 11px; }
.commit .msg { color: #586069; font-size: 11px; }
.latest { display: flex; gap: 4px; margin-left: auto; }
.sha { color: #444d56; font: 11px/20px "DejaVu Sans Mono", monospace; }
.files { width: 100%; table-layout: fixed; border: 1px solid #dfe2e5; border-top: 0; border-radius: 0 0 3px 3px; border-spacing: 0; background: #f6f8fa; }
.files td { height: 32px; padding: 0 10px; color: #6a737d; }
.files .name { width: 334px; }
.file { display: flex; align-items: center; gap: 5px; }
.file svg { color: #7c98b8; }
.files .age { text-align: right; }
.readme { margin-top: 10px; border: 1px solid #d1d5da; border-radius: 3px; }
.readme-head { display: flex; align-items: center; gap: 4px; height: 35px; padding: 0 8px; border-bottom: 1px solid #d1d5da; background: #f6f8fa; }
.readme-head h3 { font-size: 13px; font-weight: 600; }
.edit { margin-left: auto; color: #586069; }
.readme-body { display: flex; flex-direction: column; gap: 16px; padding: 41px 48px 40px; font-size: 15px; line-height: 24px; }
.readme-body h1 { padding-bottom: 9px; border-bottom: 1px solid #eaecef; font-size: 30px; font-weight: 600; line-height: 40px; }
.footer { display: flex; justify-content: space-between; margin-top: 40px; padding-top: 40px; border-top: 1px solid #eaecef; font-size: 11px; color: #586069; }
.footer .i24 { color: #c6cbd1; }
.links { display: flex; gap: 17px; }

/* Windows taskbar */
.taskbar { display: flex; height: 40px; background: #1b1e1f; color: #fff; }
.app { display: flex; align-items: center; justify-content: center; width: 48px; height: 40px; border: 0; padding: 0; background: none; color: #fff; }
.winsearch { display: flex; align-items: center; gap: 9px; width: 344px; padding: 0 10px; border: 1px solid #b8b8b8; background: #f1f1f1; font-size: 14px; }
.winsearch input { flex: 1; }
.winsearch input::placeholder { color: #3c3c3c; }
.apps { display: flex; gap: 1px; margin-left: 3px; }
.open { background: linear-gradient(#76b9ed, #76b9ed) center bottom / 40px 2px no-repeat; }
.active { background: linear-gradient(#76b9ed, #76b9ed) center bottom / 48px 2px no-repeat #4a4d4e; }
.tray { display: flex; align-items: center; gap: 8px; margin-left: auto; margin-right: 4px; padding-right: 12px; border-right: 1px solid #6a6c6d; font-size: 11px; }
.clock { display: flex; flex-direction: column; width: 60px; text-align: center; line-height: 18px; }
.notes { position: relative; margin-left: 6px; color: #fff; padding-top: 4px; }
.num { position: absolute; right: 0; bottom: -1px; width: 16px; height: 16px; border: 1px solid #999; border-radius: 50%; background: #33373a; line-height: 14px; text-align: center; }
```
